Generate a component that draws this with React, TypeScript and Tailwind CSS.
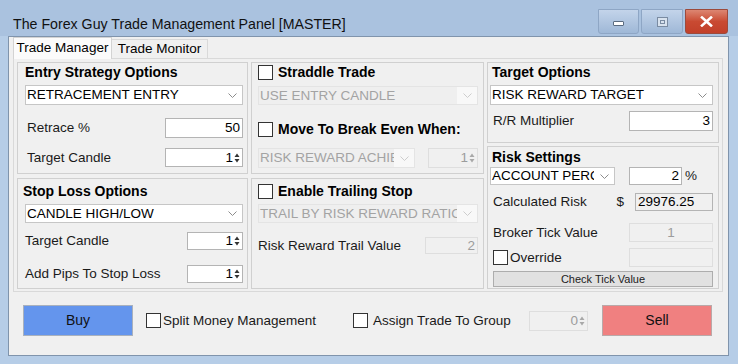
import React from 'react';

const FONT = "font-['Liberation_Sans',Arial,sans-serif]";

function Chevron({ disabled }: { disabled?: boolean }) {
  return (
    <svg width="9" height="5" viewBox="0 0 9 5" className="shrink-0">
      <path d="M0.5 0.5 L4.5 4.5 L8.5 0.5" fill="none" stroke={disabled ? '#cdcdcd' : '#8c8c8c'} strokeWidth="1" />
    </svg>
  );
}

function Arrows({ disabled }: { disabled?: boolean }) {
  const c = disabled ? '#a8a8a8' : '#333333';
  return (
    <svg width="6" height="12" viewBox="0 0 6 12" className="shrink-0">
      <polygon points="0.5,5 3,1.5 5.5,5" fill={c} />
      <polygon points="0.5,7 3,10.5 5.5,7" fill={c} />
    </svg>
  );
}

function Combo({ value, className = '', disabled }: { value: string; className?: string; disabled?: boolean }) {
  return (
    <div
      className={`flex items-center border ${
        disabled ? 'border-[#e4e4e4] bg-[#efefef] text-[#a3a3a3]' : 'border-[#c6c6c6] bg-white text-black'
      } ${className}`}
    >
      <span className="min-w-0 flex-1 overflow-hidden whitespace-nowrap pl-[1px] text-[13.5px] leading-none">{value}</span>
      <span className={`flex h-full w-[20px] shrink-0 items-center justify-center ${disabled ? 'bg-[#f8f8f8]' : ''}`}>
        <Chevron disabled={disabled} />
      </span>
    </div>
  );
}

function Field({
  value = '',
  className = '',
  align = 'right',
  kind = 'normal',
  spin,
}: {
  value?: string;
  className?: string;
  align?: 'left' | 'right' | 'center';
  kind?: 'normal' | 'readonly' | 'disabled';
  spin?: boolean;
}) {
  const look =
    kind === 'normal'
      ? 'border-[#b4b4b4] bg-white text-black'
      : kind === 'readonly'
      ? 'border-[#b4b4b4] bg-[#f0f0f0] text-black'
      : 'border-[#dedede] bg-[#f0f0f0] text-[#9c9c9c]';
  const just = align === 'left' ? 'justify-start pl-[2px]' : align === 'center' ? 'justify-center' : 'justify-end pr-[2px]';
  return (
    <div className={`flex items-center border text-[13.5px] leading-none ${look} ${just} ${className}`}>
      <span>{value}</span>
      {spin && (
        <span className="ml-[1px] flex items-center">
          <Arrows disabled={kind === 'disabled'} />
        </span>
      )}
    </div>
  );
}

function Check() {
  return <div className="h-[15px] w-[15px] shrink-0 border border-[#333333] bg-white" />;
}

function Group({ className = '', children }: { className?: string; children: React.ReactNode }) {
  return <div className={`flex flex-col border border-[#d0d0d0] ${className}`}>{children}</div>;
}

function Title({ children, className = '' }: { children: React.ReactNode; className?: string }) {
  return <div className={`h-[18px] text-[14px] font-bold leading-[18px] text-black ${className}`}>{children}</div>;
}

function Label({ children, className = '' }: { children: React.ReactNode; className?: string }) {
  return <span className={`text-[13.5px] leading-none text-[#1a1a1a] ${className}`}>{children}</span>;
}

function TitleBar() {
  return (
    <div className="flex h-[36px] items-start bg-[#aac2df]">
      <span className="mt-[15px] pl-[13px] text-[14.2px] leading-[18px] text-[#111]">
        The Forex Guy Trade Management Panel [MASTER]
      </span>
      <div className="ml-auto mr-[10px] mt-[9px] flex gap-[2px]">
        <div className="flex h-[25px] w-[41px] items-center justify-center rounded-b-[3px] border border-[#8ea6c5] bg-gradient-to-b from-[#c3d4ea] to-[#9fb8d7]">
          <div className="mt-[3px] h-[5px] w-[11px] rounded-[1px] border border-[#5a6b80] bg-white" />
        </div>
        <div className="flex h-[25px] w-[42px] items-center justify-center rounded-b-[3px] border border-[#8ea6c5] bg-gradient-to-b from-[#c3d4ea] to-[#9fb8d7]">
          <div className="flex h-[10px] w-[11px] items-center justify-center border border-[#7a8ba2] bg-[#d8e2ee]">
            <div className="h-[4px] w-[5px] border border-[#7a8ba2]" />
          </div>
        </div>
        <div className="flex h-[25px] w-[43px] items-center justify-center rounded-b-[3px] border border-[#9c4a3c] bg-gradient-to-b from-[#dc8672] via-[#c94a32] to-[#c2402a]">
          <svg width="13" height="11" viewBox="0 0 13 11">
            <path d="M2 1.5 L11 9.5 M11 1.5 L2 9.5" stroke="#ffffff" strokeWidth="2.6" strokeLinecap="square" />
          </svg>
        </div>
      </div>
    </div>
  );
}

export default function App() {
  return (
    <div className={`flex h-[364px] w-[738px] flex-col overflow-hidden bg-[#b6cde7] ${FONT}`}>
      <TitleBar />
      <div className="flex flex-1 pb-[8px] pl-[8px] pr-[9px]">
        <div className="flex flex-1 flex-col border border-[#8094ac] bg-[#f0f0f0]">
          {/* tabs */}
          <div className="flex h-[21px] items-end pl-[4px]">
            <div className="relative z-10 -mb-px flex h-[22px] w-[99px] items-center justify-center border border-b-0 border-[#d3d3d3] bg-[#fbfbfb] text-[13.5px] text-black">
              Trade Manager
            </div>
            <div className="flex h-[19px] w-[96px] items-center justify-center border border-b-0 border-l-0 border-[#d9d9d9] bg-[#f0f0f0] text-[13.5px] text-black">
              Trade Monitor
            </div>
          </div>

          {/* tab page */}
          <div className="ml-[4px] flex h-[234px] w-[710px] border border-[#d9d9d9] pb-[2px] pl-[3px] pr-[3px] pt-[3px]">
            <div className="grid grid-cols-[231px_233px] grid-rows-[112px_111px] gap-x-[3px] gap-y-[4px]">
              <Group className="pl-[7px] pr-[4px]">
                <Title>Entry Strategy Options</Title>
                <Combo value="RETRACEMENT ENTRY" className="mt-[4px] h-[20px]" />
                <div className="mt-[13px] flex h-[20px] items-center justify-between">
                  <Label className="pl-[2px]">Retrace %</Label>
                  <Field value="50" className="h-full w-[78px]" />
                </div>
                <div className="mt-[10px] flex h-[19px] items-center justify-between">
                  <Label className="pl-[2px]">Target Candle</Label>
                  <Field value="1" spin className="h-full w-[78px]" />
                </div>
              </Group>

              <Group className="pl-[6px] pr-[5px]">
                <div className="flex h-[18px] items-center gap-[5px]">
                  <Check />
                  <Title>Straddle Trade</Title>
                </div>
                <Combo value="USE ENTRY CANDLE" disabled className="mt-[5px] h-[19px]" />
                <div className="mt-[15px] flex h-[18px] items-center gap-[5px]">
                  <Check />
                  <Title>Move To Break Even When:</Title>
                </div>
                <div className="mt-[10px] flex h-[20px] items-center justify-between">
                  <Combo value="RISK REWARD ACHIEVED" disabled className="h-full w-[157px]" />
                  <Field value="1" spin kind="disabled" className="h-full w-[50px]" />
                </div>
              </Group>

              <Group className="pl-[5px] pr-[4px] pt-[3px]">
                <Title>Stop Loss Options</Title>
                <Combo value="CANDLE HIGH/LOW" className="ml-[2px] mt-[4px] h-[19px]" />
                <div className="mt-[9px] flex h-[18px] items-center justify-between pl-[2px]">
                  <Label>Target Candle</Label>
                  <Field value="1" spin className="h-full w-[56px]" />
                </div>
                <div className="mt-[15px] flex h-[18px] items-center justify-between pl-[2px]">
                  <Label>Add Pips To Stop Loss</Label>
                  <Field value="1" spin className="h-full w-[56px]" />
                </div>
              </Group>

              <Group className="pl-[6px] pr-[5px] pt-[3px]">
                <div className="flex h-[18px] items-center gap-[5px]">
                  <Check />
                  <Title>Enable Trailing Stop</Title>
                </div>
                <Combo value="TRAIL BY RISK REWARD RATIO" disabled className="mt-[4px] h-[19px]" />
                <div className="mt-[14px] flex h-[17px] items-center justify-between">
                  <Label>Risk Reward Trail Value</Label>
                  <Field value="2" kind="disabled" className="h-full w-[53px]" />
                </div>
              </Group>
            </div>

            <div className="ml-[3px] flex w-[232px] flex-col gap-[3px]">
              <Group className="h-[81px] pl-[2px] pr-[5px]">
                <Title className="pl-[2px]">Target Options</Title>
                <Combo value="RISK REWARD TARGET" className="mt-[4px] h-[20px]" />
                <div className="mt-[6px] flex h-[20px] items-center justify-between">
                  <Label className="pl-[3px]">R/R Multiplier</Label>
                  <Field value="3" className="h-full w-[84px]" />
                </div>
              </Group>

              <Group className="h-[143px] pl-[2px] pr-[5px] pt-[1px]">
                <Title className="pl-[2px]">Risk Settings</Title>
                <div className="mt-[1px] flex h-[18px] items-center">
                  <Combo value="ACCOUNT PERCENTAGE" className="h-full w-[125px]" />
                  <Field value="2" className="ml-[14px] h-full w-[53px]" />
                  <Label className="ml-[3px]">%</Label>
                </div>
                <div className="mt-[8px] flex h-[18px] items-center">
                  <Label className="flex-1 pl-[3px]">Calculated Risk</Label>
                  <Label className="mr-[11px]">$</Label>
                  <Field value="29976.25" align="left" kind="readonly" className="h-full w-[78px]" />
                </div>
                <div className="mt-[12px] flex h-[19px] items-center justify-between">
                  <Label className="pl-[3px]">Broker Tick Value</Label>
                  <Field value="1" align="center" kind="disabled" className="h-full w-[84px]" />
                </div>
                <div className="mt-[6px] flex h-[19px] items-center justify-between">
                  <div className="flex items-center gap-[2px] pl-[3px]">
                    <Check />
                    <Label>Override</Label>
                  </div>
                  <Field kind="disabled" className="h-full w-[84px]" />
                </div>
                <div className="ml-[3px] mt-[4px] flex h-[16px] items-center justify-center border border-[#adadad] bg-[#e1e1e1] text-[11px] leading-none text-[#222]">
                  Check Tick Value
                </div>
              </Group>
            </div>
          </div>

          {/* bottom bar */}
          <div className="flex h-[63px] items-start pl-[14px] pt-[13px]">
            <div className="flex h-[31px] items-center">
              <div className="flex h-[31px] w-[110px] items-center justify-center border border-[#a9b1bd] bg-[#6495ed] text-[14px] text-[#111]">
                Buy
              </div>
              <div className="ml-[13px] flex w-[207px] items-center gap-[2px]">
                <Check />
                <Label>Split Money Management</Label>
              </div>
              <div className="flex w-[176px] items-center gap-[5px]">
                <Check />
                <Label>Assign Trade To Group</Label>
              </div>
              <Field value="0" spin kind="disabled" className="h-[20px] w-[59px]" />
              <div className="ml-[14px] flex h-[31px] w-[110px] items-center justify-center border border-[#b9a9a9] bg-[#f08080] text-[14px] text-[#111]">
                Sell
              </div>
            </div>
          </div>
        </div>
      </div>
    </div>
  );
}
